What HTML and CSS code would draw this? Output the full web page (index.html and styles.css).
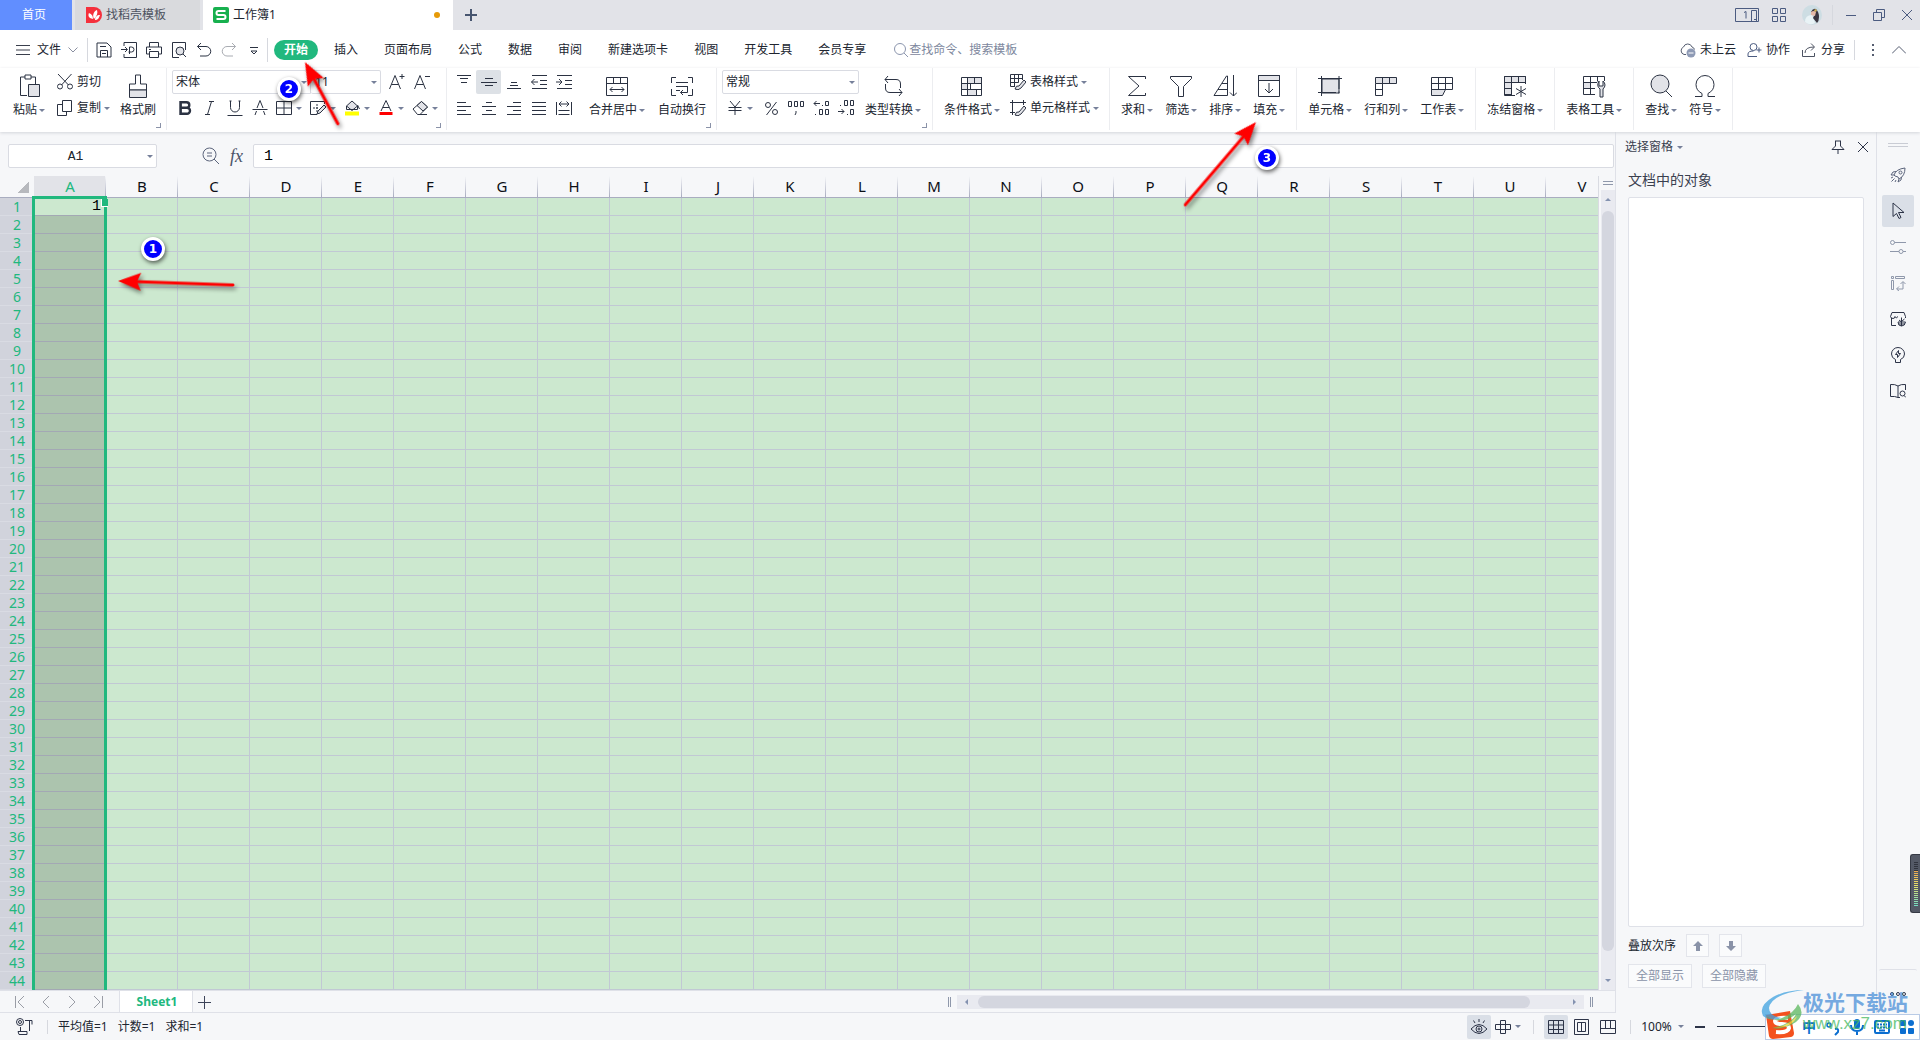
FILE: index.html
```html
<!DOCTYPE html>
<html lang="zh-CN">
<head>
<meta charset="utf-8">
<title>工作簿1</title>
<link rel="stylesheet" href="styles.css">
</head>
<body>
<header class="titlebar">
  <button class="doc-tab home">首页</button>
  <button class="doc-tab template">
    <svg width="16" height="16" viewBox="0 0 16 16"><path d="M0 0h8a8 8 0 0 1 0 16H0z" fill="#f5303c"/><path d="M7 12C2 11 2 8 3 6c2 1 4 2 4 6zM8 12C6 8 8 4 11 3c1 3 0 6-3 9zM9 13c0-3 2-5 5-5-1 3-2 5-5 5z" fill="#fff"/></svg>
    找稻壳模板</button>
  <button class="doc-tab current">
    <svg width="16" height="16" viewBox="0 0 16 16"><rect width="16" height="16" rx="2" fill="#17b04e"/><path d="M12.500 4H5.500q-2 0-2 2t2 2h5q2 0 2 2t-2 2h-7" fill="none" stroke="#fff" stroke-width="2"/></svg>
    工作簿1<i class="unsaved"></i></button>
  <button class="new-tab" aria-label="新建"><svg width="12" height="12" viewBox="0 0 12 12"><path d="M6 0v12M0 6h12" stroke="#47556f" stroke-width="2"/></svg></button>
  <div class="window-tools">
    <button class="docs" aria-label="窗口"><svg width="24" height="14" viewBox="0 0 24 14" fill="none" stroke="#4b5b80"><path d="M.5.500h23v13H.5zM16.500 13.500v-11h5v11M19 11.500h2M9 4.500l2-1v7"/></svg></button>
    <button aria-label="应用"><svg width="14" height="14" viewBox="0 0 14 14" fill="none" stroke="#4b5b80"><path d="M.5.500h5v5h-5zM8.500.500h5v5h-5zM.5 8.500h5v5h-5zM8.500 8.500h5v5h-5z"/></svg></button>
    <button class="avatar" aria-label="账户"><svg width="20" height="20" viewBox="0 0 20 20"><circle cx="10" cy="10" r="10" fill="#cddde3"/><path d="M3 17q0-7 7-7l3 8q-5 3-10-1z" fill="#e9f3f6"/><path d="M9 7q2-4 5-3 3 3 3 8 0 4-2 6l-4-5 2-4z" fill="#3a3540"/><path d="M9 7q3-2 5 0l-1 4-4-1z" fill="#e6b9a9"/><path d="M12 5l2-1 1 2-2 1z" fill="#d2b357"/></svg></button>
    <span class="rule"></span>
    <button aria-label="最小化"><svg width="12" height="12" viewBox="0 0 12 12" stroke="#4b5b80"><path d="M1 6.500h10"/></svg></button>
    <button aria-label="还原"><svg width="12" height="12" viewBox="0 0 12 12" fill="none" stroke="#4b5b80"><path d="M.5 3.500h8v8h-8zM3.500 3.500v-3h8v8h-3"/></svg></button>
    <button aria-label="关闭"><svg width="12" height="12" viewBox="0 0 12 12" stroke="#4b5b80"><path d="M1 1l10 10M11 1L1 11"/></svg></button>
  </div>
</header>

<nav class="menubar">
  <button class="file-menu">
    <svg width="14" height="10" viewBox="0 0 14 10" stroke="#3a3f4d"><path d="M0 .5h14M0 5h14M0 9.500h14"/></svg>文件
    <svg width="10" height="6" viewBox="0 0 10 6" fill="none" stroke="#8a8fa0"><path d="M.5.500l4.500 4.500L9.500.500"/></svg>
  </button>
  <div class="quick">
    <button aria-label="保存"><svg width="16" height="16" viewBox="0 0 16 16"><path d="M1 1h10l4 4v10H1zM4.500 15V8.500h7V15M4 4.500h6M6 11.500h4"/></svg></button>
    <button aria-label="输出为PDF"><svg width="16" height="16" viewBox="0 0 16 16"><path d="M3 4V.5h12.500v15H3V12M0 7.500h6M4 5l2.500 2.500L4 10M8.500 12V5h2a2.500 2.500 0 0 1 0 5h-3"/></svg></button>
    <button aria-label="打印"><svg width="16" height="16" viewBox="0 0 16 16"><path d="M3.500 5V.5h9V5M3.500 12H.5V5h15v7h-3M3.500 9.500h9v6h-9zM3 7.500h2"/></svg></button>
    <button aria-label="打印预览"><svg width="16" height="16" viewBox="0 0 16 16"><path d="M8 15.500H1.500V.5h13V8"/><circle cx="9" cy="9" r="4" fill="#e2e3e8"/><path d="M12 12l3 3"/></svg></button>
    <button aria-label="撤销"><svg width="16" height="16" viewBox="0 0 16 16"><path d="M5 1L1.500 4.500 5 8M1.500 4.500H10a4.700 4.700 0 0 1 0 9.500H4"/></svg></button>
    <button class="faded" aria-label="重做"><svg width="16" height="16" viewBox="0 0 16 16"><path d="M11 1l3.500 3.500L11 8M14.500 4.500H6a4.700 4.700 0 0 0 0 9.500h6"/></svg></button>
    <button aria-label="更多"><svg width="16" height="16" viewBox="0 0 16 16"><path d="M4 5.500h8M5 9h6l-3 3z"/></svg></button>
  </div>
  <div class="tabs">
    <button class="active">开始</button><button>插入</button><button>页面布局</button><button>公式</button><button>数据</button><button>审阅</button><button>新建选项卡</button><button>视图</button><button>开发工具</button><button>会员专享</button>
  </div>
  <label class="search"><svg width="16" height="16" viewBox="0 0 16 16" fill="none" stroke="#8c96ae"><circle cx="7" cy="7" r="5.500"/><path d="M11 11l4 4"/></svg><input type="text" placeholder="查找命令、搜索模板" aria-label="查找命令"></label>
  <div class="account">
    <button><svg width="17" height="16" viewBox="0 0 17 16" fill="none" stroke="#555d70"><path d="M7 12.500H5a4 4 0 0 1-.500-7.500 4.500 4.500 0 0 1 8.500 0q2 .5 2.500 2.500"/><circle cx="12" cy="11" r="4.500" fill="#8e9ab5" stroke="none"/><path d="M9.500 11h5" stroke="#fff"/></svg>未上云</button>
    <button><svg width="15" height="16" viewBox="0 0 15 16" fill="none" stroke="#4b5b80"><circle cx="6.500" cy="5" r="3.500"/><path d="M10 14.500H1V12q0-3 5.500-3M12 5.500v5M9.500 8h5"/></svg>协作</button>
    <button><svg width="16" height="16" viewBox="0 0 16 16" fill="none" stroke="#4d5362"><path d="M1.500 8v6.500h12V11M4 11q0-6 9-6M10 1.500L13.500 5 10 8.500"/></svg>分享</button>
    <span class="rule"></span>
    <button aria-label="选项"><svg width="4" height="14" viewBox="0 0 4 14" fill="#555d70"><path d="M1 1h2v2H1zM1 6h2v2H1zM1 11h2v2H1z"/></svg></button>
    <button aria-label="收起"><svg width="14" height="8" viewBox="0 0 14 8" fill="none" stroke="#555d70"><path d="M0 7.500l7-7 7 7"/></svg></button>
  </div>
</nav>

<section class="ribbon">
  <div class="group clipboard">
    <button class="tool"><svg width="24" height="24" viewBox="0 0 24 24"><path d="M8 3H3.500v18.500H10M14 3h4.500v7M8 1h6v4H8z"/><path class="tint" d="M11.500 10.500h11v12h-11z"/></svg><span>粘贴<i class="caret"></i></span></button>
    <div class="stack">
      <button class="mini"><svg width="16" height="16" viewBox="0 0 16 16"><path d="M1 0l10.500 11M14.500 0L4.500 11"/><circle cx="3" cy="12.500" r="2.500"/><circle cx="13" cy="12.500" r="2.500"/></svg>剪切</button>
      <button class="mini"><svg width="16" height="16" viewBox="0 0 16 16"><path d="M5.500.5h9v11h-9zM5.500 4.500h-5v11h9v-4"/></svg>复制<i class="caret"></i></button>
    </div>
    <button class="tool"><svg width="24" height="24" viewBox="0 0 24 24"><path d="M9.500 1h5v9h6v6h-17v-6h6z"/><path class="tint" d="M3.500 16h17v7.500h-17z"/></svg><span>格式刷</span></button>
    <i class="launcher"></i>
  </div>

  <div class="group font">
    <div class="stack">
      <div class="row">
        <span class="combo name"><select aria-label="字体"><option>宋体</option></select></span><span class="combo size"><select aria-label="字号"><option>11</option></select></span>
        <button class="ib" aria-label="增大字号"><svg width="16" height="16" viewBox="0 0 16 16"><path d="M.5 15L6 1.500 11.500 15M2.500 10.500h7M13 0v5M10.500 2.500h5"/></svg></button>
        <button class="ib" aria-label="减小字号"><svg width="16" height="16" viewBox="0 0 16 16"><path d="M.5 15L6 1.500 11.500 15M2.500 10.500h7M11 2.500h5"/></svg></button>
      </div>
      <div class="row">
        <button class="ib" aria-label="加粗"><svg width="16" height="16" viewBox="0 0 16 16"><path stroke-width="2.400" d="M3.500 2.200h6a2.800 2.800 0 0 1 0 5.600h-6h6.500a3 3 0 0 1 0 6H3.500zM3.700 2v12"/></svg></button>
        <button class="ib" aria-label="倾斜"><svg width="16" height="16" viewBox="0 0 16 16"><path d="M7 1.500h5M3 14.500h5M9.500 1.500l-4 13"/></svg></button>
        <button class="ib" aria-label="下划线"><svg width="16" height="16" viewBox="0 0 16 16"><path d="M3.500 1v6.500a4.500 4.500 0 0 0 9 0V1M.5 15.500h15M2.500 1h2M11.500 1h2"/></svg></button>
        <button class="ib" aria-label="删除线"><svg width="16" height="16" viewBox="0 0 16 16"><path d="M3 15l1.500-4M13 15l-1.500-4M5 8l3-7.500L11 8M.5 9.500h15"/></svg></button>
        <button class="ib split" aria-label="边框"><svg width="16" height="16" viewBox="0 0 16 16"><path d="M.5 1.500h15v13H.5zM8 1.500v13M.5 8h15"/></svg><i class="caret"></i></button>
        <button class="ib split" aria-label="绘图边框"><svg width="16" height="16" viewBox="0 0 16 16"><path d="M7 14.500H.5v-13h14V4"/><path stroke-dasharray="2 1" d="M3 8h6M7 4v8"/><path class="tint" d="M7 14l1-3 6-6 2 2-6 6z"/></svg><i class="caret"></i></button>
        <button class="ib split" aria-label="填充颜色"><svg width="16" height="16" viewBox="0 0 16 16"><path class="tint" d="M2.500 6L8 1l5.500 5L8 10.500z"/><path d="M2.500 6v3.500h11V6M13.500 5l2 4"/><path d="M1 13.500h14" stroke="#ff0" stroke-width="4"/></svg><i class="caret"></i></button>
        <button class="ib split" aria-label="字体颜色"><svg width="16" height="16" viewBox="0 0 16 16"><path d="M3 11L8 .5 13 11M5 7.500h6"/><path d="M1.500 13.500h13" stroke="#f00" stroke-width="3"/></svg><i class="caret"></i></button>
        <button class="ib split" aria-label="清除"><svg width="16" height="16" viewBox="0 0 16 16"><path d="M1 9l8.500-7.500L15.500 7 8 14.500H5.500zM7 14.500h8"/><path class="tint" d="M5 5.500l4.500-4 6 5.500-4.500 4z"/></svg><i class="caret"></i></button>
      </div>
    </div>
    <i class="launcher"></i>
  </div>

  <div class="group align">
    <div class="stack">
      <div class="row">
        <button class="ib" aria-label="顶端对齐"><svg width="16" height="16" viewBox="0 0 16 16"><path d="M1 1.500h14M4 4.500h8M5 8.500h6"/></svg></button>
        <button class="ib on" aria-label="垂直居中"><svg width="16" height="16" viewBox="0 0 16 16"><path d="M4 4.500h8M0 8.500h16M4 11.500h8"/></svg></button>
        <button class="ib" aria-label="底端对齐"><svg width="16" height="16" viewBox="0 0 16 16"><path d="M5 8.500h6M4 11.500h8M1 14.500h14"/></svg></button>
        <button class="ib" aria-label="减少缩进"><svg width="16" height="16" viewBox="0 0 16 16"><path d="M1 1.500h15M9 6.500h7M9 10.500h7M1 14.500h15M.5 8H7M3.500 5l-3 3 3 3"/></svg></button>
        <button class="ib" aria-label="增加缩进"><svg width="16" height="16" viewBox="0 0 16 16"><path d="M1 1.500h15M9 6.500h7M9 10.500h7M1 14.500h15M0 8h6M3 5l3 3-3 3"/></svg></button>
      </div>
      <div class="row">
        <button class="ib" aria-label="左对齐"><svg width="16" height="16" viewBox="0 0 16 16"><path d="M1 2.500h9M1 6.500h14M1 10.500h9M1 14.500h14"/></svg></button>
        <button class="ib" aria-label="水平居中"><svg width="16" height="16" viewBox="0 0 16 16"><path d="M5 2.500h6M1 6.500h14M5 10.500h6M1 14.500h14"/></svg></button>
        <button class="ib" aria-label="右对齐"><svg width="16" height="16" viewBox="0 0 16 16"><path d="M7 2.500h8M1 6.500h14M7 10.500h8M1 14.500h14"/></svg></button>
        <button class="ib" aria-label="两端对齐"><svg width="16" height="16" viewBox="0 0 16 16"><path d="M1 2.500h14M1 6.500h14M1 10.500h14M1 14.500h14"/></svg></button>
        <button class="ib" aria-label="分散对齐"><svg width="16" height="16" viewBox="0 0 16 16"><path d="M.5 2v13M15.500 2v13M2.500 10.500h11M2.500 14.500h11M3 4h10M5.500 1.500L3 4l2.500 2.500M10.500 1.500L13 4l-2.500 2.500"/></svg></button>
      </div>
    </div>
    <button class="tool"><svg width="24" height="24" viewBox="0 0 24 24"><path d="M1.500 3.500h21v18h-21zM1.500 9.500h21M8.500 3.500v6M15.500 3.500v6M5 15.500h14M7.500 13L5 15.500 7.500 18M16.500 13l2.500 2.500-2.500 2.500"/></svg><span>合并居中<i class="caret"></i></span></button>
    <button class="tool"><svg width="24" height="24" viewBox="0 0 24 24"><path d="M6 3.500H1.500V9M18 3.500h4.500V9M1.500 15v6.500H6M22.500 15v6.500H18M6 8.500h12M6 12.500h12M6 16.500h4M17.500 12.500v6h-7M13 16l-2.500 2.500L13 21"/></svg><span>自动换行</span></button>
    <i class="launcher"></i>
  </div>

  <div class="group number">
    <div class="stack">
      <div class="row"><span class="combo format"><select aria-label="数字格式"><option>常规</option></select></span></div>
      <div class="row">
        <button class="ib split" aria-label="货币"><svg width="16" height="16" viewBox="0 0 16 16"><path d="M3 1l5 6 5-6M1.500 7.500h13M1.500 10.500h13M8 7v8"/></svg><i class="caret"></i></button>
        <button class="ib" aria-label="百分比"><svg width="16" height="16" viewBox="0 0 16 16"><circle cx="5" cy="5" r="2.500"/><circle cx="12" cy="12" r="2.500"/><path d="M13.500 2l-10 13"/></svg></button>
        <button class="ib" aria-label="千位分隔"><svg width="18" height="16" viewBox="0 0 18 16"><path d="M1.500 1.500h3v5h-3zM7.500 1.500h3v5h-3zM13.500 1.500h3v5h-3zM9 11v2l-1 2"/></svg></button>
        <button class="ib" aria-label="增加小数位"><svg width="16" height="16" viewBox="0 0 16 16"><path d="M7 3.500H1M3.500 1L1 3.500 3.500 6M9 5.500h1M12.500 1.500h3v4h-3zM2 14.500h1M6.500 9.500h3v5h-3zM12.500 9.500h3v5h-3z"/></svg></button>
        <button class="ib" aria-label="减少小数位"><svg width="16" height="16" viewBox="0 0 16 16"><path d="M2 5.500h1M6.500.5h3v5h-3zM12.500.5h3v5h-3zM0 11.500h6M3.500 9L6 11.500 3.500 14M9 14.500h1M12.500 9.500h3v5h-3z"/></svg></button>
      </div>
    </div>
    <button class="tool"><svg width="24" height="24" viewBox="0 0 24 24"><path d="M7 2L4 5.500 7 9M4 5.500h11q4.500 0 4.500 4.500v4M18 15l3 3.500-3 3.500M21 18.500H9q-4.500 0-4.500-4.500v-4"/></svg><span>类型转换<i class="caret"></i></span></button>
    <i class="launcher"></i>
  </div>

  <div class="group styles">
    <button class="tool"><svg width="24" height="24" viewBox="0 0 24 24"><path class="tint" d="M7.500 3.500h14v6h-14zM1.500 9.500h6v6h-6zM7.500 15.500h9v6h-9z"/><path d="M1.500 3.500h20v18h-20zM1.500 9.500h20M1.500 15.500h20M7.500 3.500v6M14.500 3.500v6M10.500 9.500v6M7.500 15.500v6M16.500 15.500v6"/></svg><span>条件格式<i class="caret"></i></span></button>
    <div class="stack">
      <button class="mini"><svg width="16" height="16" viewBox="0 0 16 16"><path d="M5 12.500H.5v-12h12V6M.5 4.500h12M.5 8.500h8M4.500.5v12M8.500.5v8"/><path class="tint" d="M5 15q1-4 4-3l5-6 2 2-5 6q-3 3-6 1z"/></svg>表格样式<i class="caret"></i></button>
      <button class="mini"><svg width="16" height="16" viewBox="0 0 16 16"><path d="M0 2.500h16M2.500 0v15M13.500 0v5M0 12.500h5"/><path class="tint" d="M5 15q1-4 4-3l5-6 2 2-5 6q-3 3-6 1z"/></svg>单元格样式<i class="caret"></i></button>
    </div>
  </div>

  <div class="group">
    <button class="tool"><svg width="24" height="24" viewBox="0 0 24 24"><path d="M20.500 5V2.500h-17L14 12 3.500 21.500h17V19"/></svg><span>求和<i class="caret"></i></span></button>
    <button class="tool"><svg width="24" height="24" viewBox="0 0 24 24"><path d="M2 2.500h20.500v2l-8 8v10h-5v-10l-8-8v-2z"/></svg><span>筛选<i class="caret"></i></span></button>
    <button class="tool"><svg width="24" height="24" viewBox="0 0 24 24"><path d="M14.500 2v19.500H1L13.500 2zM5 15.500h9.500M9 9.500h5.500M20.500 1v21M17 18.500l3.500 3.500 3.500-3.500"/></svg><span>排序<i class="caret"></i></span></button>
    <button class="tool"><svg width="24" height="24" viewBox="0 0 24 24"><path class="tint" d="M1.500 1.500h21v5h-21z"/><path d="M1.500 1.500h21v21h-21zM12 9v10M8 15l4 4 4-4"/></svg><span>填充<i class="caret"></i></span></button>
  </div>

  <div class="group">
    <button class="tool"><svg width="24" height="24" viewBox="0 0 24 24"><path class="tint" d="M4 5h17v14H4z"/><path d="M0 4.500h24M3.500 2v20M0 18.500h18M21 2v13M21 17.500v2"/></svg><span>单元格<i class="caret"></i></span></button>
    <button class="tool"><svg width="24" height="24" viewBox="0 0 24 24"><path class="tint" d="M1.500 3.500h21v6h-21z"/><path d="M8.500 3.500v18h-7v-12M15.500 3.500v6M1.500 15.500h7"/></svg><span>行和列<i class="caret"></i></span></button>
    <button class="tool"><svg width="24" height="24" viewBox="0 0 24 24"><path class="tint" d="M1.500 15.500h14l-3 6h-11z"/><path d="M1.500 3.500h21v12h-21zM1.500 9.500h21M8.500 3.500v12M15.500 3.500v12"/></svg><span>工作表<i class="caret"></i></span></button>
  </div>

  <div class="group">
    <button class="tool"><svg width="24" height="24" viewBox="0 0 24 24"><path class="tint" d="M1.500 2.500h21v6h-14v12h-7z"/><path d="M12 21.500H1.500v-19h21V10M8.500 2.500v19M15.500 2.500v6M1.500 14.500h7M1.500 8.500h21M18 12v11M13 14.500l10 6M23 14.500l-10 6"/></svg><span>冻结窗格<i class="caret"></i></span></button>
  </div>
  <div class="group">
    <button class="tool"><svg width="24" height="24" viewBox="0 0 24 24"><path class="tint" d="M1.500 8.500h7v6h-7z"/><path d="M13 20.500H1.500v-18h21V7M1.500 8.500H15M1.500 14.500H13M8.500 2.500v18M15.500 2.500v5"/><path class="tint" d="M18 23v-8q-4-3-1-8v5h4V7q4 4 0 8v8z"/></svg><span>表格工具<i class="caret"></i></span></button>
  </div>
  <div class="group">
    <button class="tool"><svg width="24" height="24" viewBox="0 0 24 24"><circle class="tint" cx="11" cy="10" r="9"/><path d="M17 17l6 6"/></svg><span>查找<i class="caret"></i></span></button>
    <button class="tool"><svg width="24" height="24" viewBox="0 0 24 24"><path d="M2 22.500h7v-3q-6-3-6-9a9 9 0 0 1 18 0q0 6-6 9v3h7"/></svg><span>符号<i class="caret"></i></span></button>
  </div>
</section>

<div class="main">
  <main class="work">
    <div class="formula-bar">
      <span class="combo cellref"><input type="text" value="A1" aria-label="名称框"></span>
      <button class="fx-zoom" aria-label="浏览公式"><svg width="18" height="18" viewBox="0 0 18 18" fill="none" stroke="#5c657c"><circle cx="7.500" cy="7.500" r="6.500"/><path d="M5 6h5M5 9h5M12 12l5 5"/></svg></button>
      <button class="fx" aria-label="插入函数">fx</button>
      <input class="formula" type="text" value="1" aria-label="编辑栏">
    </div>
    <div class="sheet-area">
      <div class="sheet">
        <table id="grid"></table>
        <div class="selection"></div>
      </div>
      <div class="vscroll">
        <span class="split"></span>
        <div class="vtrack"><i class="up"></i><span class="thumb"></span><i class="down"></i></div>
      </div>
    </div>
    <div class="sheet-tabs">
      <div class="sheet-nav">
        <button aria-label="第一张"><svg width="10" height="12" viewBox="0 0 10 12"><path d="M.5 0v12M9 0L3 6l6 6"/></svg></button>
        <button aria-label="上一张"><svg width="10" height="12" viewBox="0 0 10 12"><path d="M8 0L2 6l6 6"/></svg></button>
        <button aria-label="下一张"><svg width="10" height="12" viewBox="0 0 10 12"><path d="M2 0l6 6-6 6"/></svg></button>
        <button aria-label="最后一张"><svg width="10" height="12" viewBox="0 0 10 12"><path d="M1 0l6 6-6 6M9.500 0v12"/></svg></button>
      </div>
      <button class="sheet-tab">Sheet1</button>
      <button class="add-sheet" aria-label="新建工作表"><svg width="14" height="14" viewBox="0 0 14 14" stroke="#3d4459"><path d="M7.500 1v13M1 7.500h13"/></svg></button>
      <div class="hscroll">
        <span class="grip"></span>
        <div class="htrack"><i class="left"></i><span class="thumb"></span><i class="right"></i></div>
        <span class="grip"></span>
      </div>
    </div>
  </main>

  <aside class="panel">
    <div class="panel-head">
      <button class="panel-title">选择窗格<i class="caret"></i></button>
      <button aria-label="固定"><svg width="14" height="14" viewBox="0 0 14 14"><path d="M4 1h6M4.500 1v5L1 9.500h12L9.500 6V1M7 9.500V14"/></svg></button>
      <button aria-label="关闭窗格"><svg width="12" height="12" viewBox="0 0 12 12"><path d="M1 1l10 10M11 1L1 11"/></svg></button>
    </div>
    <h2>文档中的对象</h2>
    <div class="objects"></div>
    <div class="order">叠放次序
      <button aria-label="上移"><svg width="10" height="12" viewBox="0 0 10 12"><path d="M5 1l5 5H7v5H3V6H0z"/></svg></button>
      <button aria-label="下移"><svg width="10" height="12" viewBox="0 0 10 12"><path d="M5 11l5-5H7V1H3v5H0z"/></svg></button>
    </div>
    <div class="show-hide"><button disabled>全部显示</button><button disabled>全部隐藏</button></div>
  </aside>

  <aside class="sidebar">
    <span class="drag"></span>
    <button class="soft" aria-label="推荐"><svg width="16" height="16" viewBox="0 0 16 16"><path d="M4 8q2-6 11-7 0 8-6 11l-1-2-3-1zM4 8L1 8l2-3 3-.5M9 12l-1 3 3-2 .5-3M1 11l2-1M1.500 14.500l3-3M5 15l1-2"/><circle cx="10.500" cy="5.500" r="1.500"/></svg></button>
    <button class="on" aria-label="选择"><svg width="16" height="18" viewBox="0 0 16 18"><path d="M3 1v13.500l3.500-3 2.500 5 2-1-2.500-5H14z"/></svg></button>
    <button class="off" aria-label="属性"><svg width="16" height="16" viewBox="0 0 16 16"><circle cx="2.500" cy="3.500" r="2"/><path d="M4.500 3.500H16M0 12.500h9M13 12.500h3"/><circle cx="11" cy="12.500" r="2"/></svg></button>
    <button class="off" aria-label="分析"><svg width="16" height="16" viewBox="0 0 16 16"><path d="M1.500 1.500h2v2h-2zM5.500 1.500h9v2h-9zM1.500 5.500h2v9h-2zM13 14H7M9 11.500L6.500 14 9 16M13 14V7M10.500 9L13 6.500 15.500 9"/></svg></button>
    <button aria-label="素材"><svg width="16" height="16" viewBox="0 0 16 16"><path d="M1.500 7v7.500H6M.5 5.500L2 1.500h12l1.500 4V7M.5 5.500q.5 2 2.500 2t2-2q1 3 3 0"/><path d="M8 11h7.500q-.5 4-4 4t-3.500-4zM11.500 6.500V15M11.500 11L9 9M11.500 10.500L14.500 8M9 13h6"/></svg></button>
    <button aria-label="帮助"><svg width="16" height="16" viewBox="0 0 16 16"><path d="M5.500 12.500q-4-1.500-4-5.500a6.500 6.500 0 0 1 13 0q0 4-4 5.500v3h-5zM8.500 3.500L5.500 7.500h2v3l3-4h-2z"/></svg></button>
    <button aria-label="查阅"><svg width="16" height="16" viewBox="0 0 16 16"><path d="M8 14.500Q5 13 .5 13.500v-12Q5 1 8 3q3-2 7.500-1.500V7M8 3v11.500h2"/><circle cx="12.500" cy="10.500" r="2.500"/><path d="M14 12.500l2 2"/></svg></button>
    <button class="more" aria-label="更多"><svg width="18" height="6" viewBox="0 0 18 6"><circle cx="3" cy="3" r="1.500"/><circle cx="9" cy="3" r="1.500"/><circle cx="15" cy="3" r="1.500"/></svg></button>
  </aside>
</div>

<footer class="status">
  <svg class="macro" width="18" height="18" viewBox="0 0 18 18" fill="none" stroke="#2d3448"><circle cx="4" cy="4" r="3.500"/><circle cx="4" cy="4" r="1.500"/><path d="M9 2.500h7v4M13.500 3v10M4.500 9v4.500M2 13.500h9v3H3z"/></svg>
  <span class="rule"></span>
  <span class="stats"><span>平均值=1</span><span>计数=1</span><span>求和=1</span></span>
  <div class="views">
    <button class="on" aria-label="护眼模式"><svg width="18" height="16" viewBox="0 0 18 16"><path d="M1 10q8-9 16 0-8 9-16 0zM9 0v3M3.500 1.500L5 4M14.500 1.500L13 4"/><circle cx="9" cy="10" r="3"/><circle cx="9" cy="10" r="1"/></svg></button>
    <button class="with-caret" aria-label="阅读模式"><svg width="16" height="16" viewBox="0 0 16 16"><path d="M5.500 1.500h5v13h-5zM.5 5.500h15v5H.5z"/></svg><i class="caret"></i></button>
    <span class="rule"></span>
    <button class="on" aria-label="普通视图"><svg width="16" height="14" viewBox="0 0 16 14"><path d="M.5.500h15v13H.5zM.5 5h15M.5 9.500h15M5.500.5v13M10.500.5v13"/></svg></button>
    <button aria-label="页面布局"><svg width="16" height="16" viewBox="0 0 16 16"><path d="M.5.500h14v15H.5zM3.500 3.500h8v9h-8zM7.500 3.500v9"/></svg></button>
    <button aria-label="分页预览"><svg width="16" height="14" viewBox="0 0 16 14"><path d="M.5.500h15v13H.5zM.5 8.500h10v-8M5.500.5v8M10.500 8.500h5"/></svg></button>
    <span class="rule"></span>
    <button class="zoom-value">100%<i class="caret"></i></button>
    <button class="minus" aria-label="缩小"></button>
    <span class="zoom-line"></span>
  </div>
</footer>

<div class="meter" aria-hidden="true"><i class="idle"></i><i class="level"></i></div>

<div class="ime">
  <svg width="30" height="28" viewBox="0 0 30 28"><path d="M0 4l24-4 4 22q0 3-3 4L7 28q-3 0-4-3z" fill="#f4511e"/><path d="M22 7q-12-1-13 3 0 3 7 3t7 4q-1 5-13 4" fill="none" stroke="#fff" stroke-width="4"/></svg>
  <button>中</button>
  <button aria-label="标点"><svg width="14" height="18" viewBox="0 0 14 18"><circle cx="3" cy="7" r="2" fill="none" stroke="#0b6ed0" stroke-width="1.500"/><path d="M9 11q4-1 3 3l-3 3" fill="none" stroke="#0b6ed0" stroke-width="2"/></svg></button>
  <button aria-label="语音"><svg width="14" height="18" viewBox="0 0 14 18"><rect x="4" y="1" width="6" height="10" rx="3" fill="#0b6ed0"/><path d="M1 7q0 6 6 6t6-6M7 13v4" fill="none" stroke="#0b6ed0" stroke-width="2"/></svg></button>
  <button aria-label="键盘"><svg width="16" height="14" viewBox="0 0 16 14" fill="none" stroke="#0b6ed0" stroke-width="2"><rect x="1" y="1" width="14" height="12" rx="1"/><path d="M3 4.500h10M3 7.500h10" stroke-dasharray="2 1"/><path d="M5 10.500h6"/></svg></button>
  <button aria-label="工具箱"><svg width="14" height="14" viewBox="0 0 14 14" fill="#0b6ed0"><rect width="6" height="6" rx="1"/><circle cx="11" cy="3" r="3"/><rect y="8" width="6" height="6" rx="1"/><rect x="8" y="8" width="6" height="6" rx="1"/></svg></button>
</div>

<div class="watermark">
  <svg width="44" height="42" viewBox="0 0 44 42"><path d="M43 0Q10 4 8 18q0 8 12 10-10 4-18-2-5-10 10-19Q25 0 43 0z" fill="#3fa2e0"/><path d="M5 26q4 6 16 2 12-5 16-14 8 10-2 18-12 8-24 6 20-4 24-14-14 12-30 2z" fill="#5bb85d"/><path d="M12 38q14-1 24-12-4 12-24 12z" fill="#e8d437"/></svg>
  <div><strong>极光下载站</strong><span>www.xz7.com</span></div>
</div>

<svg class="annotations" aria-hidden="true">
  <defs><g id="arrow"><path d="M0 0l-23-9 4 9-4 9z" fill="#f00"/></g></defs>
  <g class="arrows" stroke="#f00" stroke-width="3" stroke-linecap="round">
    <g transform="translate(118 281) rotate(182)"><use href="#arrow" stroke="none"/><path d="M-18 0h-97"/></g>
    <g transform="translate(305 62) rotate(-118)"><use href="#arrow" stroke="none"/><path d="M-18 0h-52"/></g>
    <g transform="translate(1256 122) rotate(-49.500)"><use href="#arrow" stroke="none"/><path d="M-18 0h-91"/></g>
  </g>
</svg>
<span class="step one">1</span>
<span class="step two">2</span>
<span class="step three">3</span>
<script src="grid.js"></script>
</body>
</html>
```
FILE: grid.js
```js
const columns = "ABCDEFGHIJKLMNOPQRSTUV".split("");
const rowCount = 44;
const values = { A1: "1" };

const head = columns.map(c => `<th scope="col">${c}</th>`).join("");
let rows = "";
for (let r = 1; r <= rowCount; r++) {
  const cells = columns.map(c => `<td>${values[c + r] || ""}</td>`).join("");
  rows += `<tr><th scope="row">${r}</th>${cells}</tr>`;
}
document.getElementById("grid").innerHTML =
  `<thead><tr><th class="corner"></th>${head}</tr></thead><tbody>${rows}</tbody>`;
```
FILE: styles.css
```css
* { box-sizing: border-box; }

body {
  margin: 0;
  min-height: 100vh;
  display: flex;
  flex-direction: column;
  position: relative;
  overflow: hidden;
  background: #f6f7f9;
  color: #20252f;
  font: 12px/16px "Noto Sans", "Noto Sans CJK SC", sans-serif;
}

button, input, select { font: inherit; color: inherit; }
button { border: 0; padding: 0; background: none; display: flex; align-items: center; justify-content: center; white-space: nowrap; }
svg { display: block; flex: none; }
.rule { width: 1px; background: #d6d8de; flex: none; }
.caret { border: 3px solid transparent; border-top: 3px solid #76809a; border-bottom: 0; width: 6px; height: 3px; flex: none; }

/* title bar */
.titlebar { display: flex; height: 30px; background: #e2e3e8; }
.doc-tab { height: 30px; gap: 4px; }
.home { width: 72px; padding-right: 4px; background: #618eff; color: #fff; }
.template { width: 125px; margin: 0 3px; padding-left: 11px; justify-content: flex-start; background: #d9dadd; color: #4d5260; }
.current { width: 250px; padding: 0 13px 0 10px; justify-content: flex-start; background: #fff; }
.unsaved { width: 6px; height: 6px; margin-left: auto; border-radius: 50%; background: #e69a08; }
.new-tab { width: 36px; }
.window-tools { display: flex; align-items: center; gap: 16px; margin-left: auto; padding-right: 7px; }
.window-tools .rule { height: 20px; margin: 0 -4px 0 -6px; }
.window-tools .docs { margin-right: -3px; }

/* menu bar */
.menubar { display: flex; align-items: center; height: 38px; padding-top: 1px; background: #fff; }
.file-menu { gap: 7px; padding: 0 9px 0 16px; height: 24px; border-right: 1px solid #d6d8de; }
.quick { display: flex; align-items: center; height: 24px; padding: 0 1px 0 3px; border-right: 1px solid #d6d8de; }
.quick button { width: 25px; }
.quick button svg, .group svg { fill: none; stroke: #2b3242; }
.quick .faded { opacity: .4; }
.tabs { display: flex; gap: 6px; margin-left: 6px; }
.tabs button { height: 20px; padding: 0 10px; border-radius: 10px; }
.tabs .active { background: #21b87e; color: #fff; font-weight: 700; }
.search { display: flex; align-items: center; margin-left: 17px; }
.search input { width: 140px; border: 0; padding: 0; background: none; }
.search input::placeholder { color: #7d879d; opacity: 1; }
.account { display: flex; align-items: center; gap: 11px; margin-left: auto; padding-right: 14px; }
.account button { gap: 4px; }
.account .rule { height: 20px; margin: 0 5px 0 -2px; }
.account .rule + button { margin-right: 6px; }

/* ribbon */
.ribbon { display: flex; height: 64px; background: #fff; box-shadow: 0 1px 3px #d3d5da; position: relative; }
.group { position: relative; display: flex; gap: 12px; height: 62px; padding: 2px 11px 0; border-right: 1px solid #ecedf0; }
.group svg .tint, .group svg.tint { fill: #e2e3e8; }
.tool { flex-direction: column; gap: 4px; height: 48px; justify-content: flex-end; }
.tool span { display: flex; align-items: center; gap: 2px; }
.stack { display: flex; flex-direction: column; gap: 2px; }
.row { display: flex; height: 24px; }
.mini { height: 24px; gap: 4px; justify-content: flex-start; }
.mini .caret { margin-left: -1px; }
.launcher { position: absolute; right: 5px; bottom: 2px; width: 5px; height: 5px; border: solid #8a92a8; border-width: 0 1px 1px 0; }
.clipboard { padding-left: 13px; padding-right: 10px; }
.clipboard .stack { width: 51px; }
.font { width: 280px; padding-left: 5px; }
.align { padding: 2px 10px 0 4px; gap: 13px; }
.number { padding: 2px 11px 0 5px; gap: 6px; }
.styles { gap: 10px; padding-right: 10px; }
.ib { width: 25px; height: 24px; }
.ib.on { background: #dde1e6; border-radius: 2px; }
.split.ib { width: 34px; gap: 4px; }
.number .split.ib { width: 36px; }
.combo { position: relative; display: flex; border: 1px solid #d9dbe2; border-radius: 2px; background: #fff; height: 24px; }
.combo::after { content: ""; position: absolute; right: 3px; top: 10px; border: 3px solid transparent; border-top-color: #76809a; border-bottom: 0; pointer-events: none; }
.combo select, .combo input { appearance: none; border: 0; outline: 0; background: none; width: 100%; padding: 0 0 0 3px; }
.name { width: 139px; border-radius: 2px 0 0 2px; }
.size { width: 70px; border-left: 0; margin-right: 3px; }
.size select { padding-left: 4px; }
.format { width: 137px; }

/* work area */
.main { flex: 1; display: flex; }
.work { flex: 1; min-width: 0; display: flex; flex-direction: column; }
.formula-bar { display: flex; align-items: center; height: 44px; padding: 4px 1px 0 8px; }
.cellref { width: 149px; }
.cellref input { padding: 2px 14px 0 0; text-align: center; font: 13px/20px "Liberation Mono", monospace; }
.fx-zoom { margin-left: 45px; }
.fx { margin: 0 8px 0 8px; width: 17px; font: italic 18px/22px "Liberation Serif", serif; color: #4b5368; }
.formula { flex: 1; min-width: 0; height: 24px; padding: 0 0 0 10px; border: 1px solid #d9dbe2; border-radius: 2px; background: #fff; color: #000; font: 15px/20px "Liberation Mono", monospace; }
.sheet-area { flex: 1; display: flex; }
.sheet { flex: 1; min-width: 0; position: relative; overflow: hidden; border-right: 1px solid #d9dbe2; }
#grid { table-layout: fixed; width: 1618px; border-collapse: separate; border-spacing: 0; }
#grid th, #grid td { padding: 0; overflow: hidden; vertical-align: middle; }
#grid thead th { height: 22px; width: 72px; padding-bottom: 1px; border-bottom: 1px solid #a9adc0; font: 15px/18px "Noto Sans", sans-serif; color: #0c0f16; background: linear-gradient(#f6f7f9, #a9adc0) right / 1px 100% no-repeat; }
#grid thead .corner { width: 34px; background: linear-gradient(135deg, transparent 50%, #b7b9be 50%) 18px 6px / 11px 11px no-repeat; }
#grid thead th:nth-child(2) { background-color: #e2e3e8; color: #21b87e; }
tbody th { height: 18px; background: #d1d3dc; border-bottom: 1px solid #d9dbe3; font: 14px/16px "Noto Sans", sans-serif; color: #21b87e; }
tbody td { height: 18px; background: #cce8cf; border: solid #c1c8d4; border-width: 0 1px 1px 0; text-align: right; font: 15px/16px "Liberation Mono", monospace; color: #000; }
tbody td:nth-child(2) { background: #acc4ae; border-color: #a3a8b4; }
#grid tbody tr:first-child td:nth-child(2) { background: #cce8cf; padding-right: 4px; }
.selection { position: absolute; left: 32px; top: 20px; bottom: 0; width: 75px; border: 3px solid #21b87e; border-bottom: 0; }
.selection::after { content: ""; position: absolute; right: -4px; top: 0; width: 6px; height: 7px; background: #21b87e; border: solid #fff; border-width: 0 0 1px 1px; }
.vscroll { width: 16px; padding-left: 2px; display: flex; flex-direction: column; }
.vscroll .split { height: 4px; margin: 5px 2px; border: solid #8f98ab; border-width: 1px 0; }
.vtrack { flex: 1; width: 14px; display: flex; flex-direction: column; align-items: center; background: #e9eaf0; }
.vtrack .thumb { flex: 1; width: 12px; border-radius: 6px; background: #d4d6df; }
.up { border: 3px solid transparent; border-top: 0; border-bottom-color: #8492b0; margin: 8px 0 10px; }
.down { border: 3px solid transparent; border-bottom: 0; border-top-color: #8492b0; margin: 28px 0 8px; }

/* sheet tabs */
.sheet-tabs { display: flex; height: 23px; border: solid #dfe1e8; border-width: 1px 0; }
.sheet-nav { display: flex; align-items: center; gap: 16px; padding-left: 15px; width: 119px; }
.sheet-nav svg { fill: none; stroke: #9a9da6; }
.sheet-tab { width: 74px; padding-left: 2px; border: solid #dfe1e8; border-width: 0 1px; background: #fff; color: #21b87e; font-weight: 700; font-size: 12px; }
.add-sheet { width: 22px; }
.hscroll { width: 42%; max-width: 645px; margin: 3px 22px 3px auto; display: flex; gap: 6px; align-items: center; }
.grip { width: 3px; height: 10px; border: solid #8f98ab; border-width: 0 1px; }
.htrack { flex: 1; height: 14px; display: flex; align-items: center; background: #e9eaf0; }
.htrack .thumb { flex: 1; height: 12px; border-radius: 6px; background: #d4d6df; }
.left { border: 3px solid transparent; border-left: 0; border-right-color: #8492b0; margin: 0 10px 0 8px; }
.right { border: 3px solid transparent; border-right: 0; border-left-color: #8492b0; margin: 0 8px 0 43px; }

/* selection panel */
.panel { width: 262px; display: flex; flex-direction: column; padding: 0 12px 25px; border: solid #dfe1e8; border-width: 0 1px; }
.panel-head { display: flex; align-items: center; height: 30px; gap: 12px; margin: 0 -5px 0 -3px; }
.panel-head svg, .sidebar svg, .views svg { fill: none; stroke: #2d3448; }
.sidebar .soft svg { stroke: #5c657c; }
.sidebar .off svg { stroke: #8f98ab; }
.panel-title { margin-right: auto; gap: 4px; color: #3a404f; }
.panel h2 { margin: 8px 0 7px; font-size: 14px; line-height: 20px; font-weight: 400; color: #3a404f; }
.objects { flex: 1; border: 1px solid #dfe1e8; border-radius: 2px; background: #fff; }
.order { display: flex; align-items: center; gap: 10px; margin: 7px 0; }
.order button { width: 23px; height: 23px; border: 1px solid #e3e5eb; background: #fafbfc; }
.order svg { fill: #8a93a8; }
.show-hide { display: flex; gap: 10px; }
.show-hide button { width: 64px; height: 24px; border: 1px solid #e3e5eb; background: #fafbfc; color: #8a93a8; }

/* side tool strip */
.sidebar { width: 43px; display: flex; flex-direction: column; align-items: center; gap: 4px; padding: 11px 1px 16px 0; }
.drag { width: 20px; height: 4px; margin-bottom: 8px; border: solid #c9ccd4; border-width: 1px 0; }
.sidebar button { width: 32px; height: 32px; border-radius: 2px; }
.sidebar .on, .views .on { background: #dadfe7; }
.sidebar .more { width: 38px; height: 28px; margin-top: auto; border-top: 1px solid #dfe1e8; align-items: flex-end; }

/* status bar */
.status { display: flex; align-items: center; height: 27px; padding-left: 16px; }
.status .rule { height: 14px; margin: 0 10px 0 13px; }
.stats { display: flex; gap: 10px; }
.views { display: flex; align-items: center; gap: 2px; margin-left: auto; padding-right: 155px; }
.views button { height: 24px; width: 24px; border-radius: 2px; }
.views .with-caret { width: 30px; gap: 4px; }
.views .rule { margin: 0 8px; }
.views .zoom-value { width: 43px; gap: 6px; margin-right: 9px; }
.views .minus { width: 10px; height: 2px; border-radius: 0; background: #2d3448; }
.zoom-line { width: 48px; height: 1px; margin-left: 10px; background: #2d3448; }

/* floating desktop widgets */
.meter { position: absolute; right: 0; top: 854px; width: 10px; height: 59px; padding: 7px 2px 0 3px; background: #545966; border: 1px solid #363a45; border-right: 0; border-radius: 3px 0 0 3px; }
.meter i { display: block; }
.idle { height: 9px; background: repeating-linear-gradient(#30333d 0 1px, transparent 1px 2px); }
.level { height: 36px; background: repeating-linear-gradient(transparent 0 1px, #545966 1px 2px), linear-gradient(#eda84d, #e8e26a 40%, #6bdcc8); }
.ime { position: absolute; right: 0; bottom: 0; width: 155px; height: 26px; display: flex; align-items: center; gap: 10px; padding-right: 6px; background: #fff; border: 1px solid #b9cbe6; }
.ime > svg { margin: -4px -4px 0 0; }
.ime button { color: #0b6ed0; font-weight: 700; font-size: 14px; flex: 1; }
.watermark { position: absolute; right: 12px; bottom: 6px; display: flex; opacity: .75; }
.watermark div { display: flex; flex-direction: column; margin-left: -2px; }
.watermark strong { font-size: 21px; line-height: 24px; color: #4a8fd8; }
.watermark span { font: 17px/20px "Liberation Sans", sans-serif; color: #45b860; }

/* tutorial marks */
.annotations { position: absolute; left: 0; top: 0; width: 100%; height: 100%; pointer-events: none; }
.arrows { filter: drop-shadow(2px 3px 2px #0007); }
.step { position: absolute; width: 24px; height: 24px; border: 3px solid #fff; border-radius: 50%; background: #00f; color: #fff; text-align: center; font: 700 12px/18px "DejaVu Sans", sans-serif; box-shadow: 1px 2px 4px #0009; }
.one { left: 141px; top: 237px; }
.two { left: 277px; top: 77px; }
.three { left: 1255px; top: 146px; }
```
